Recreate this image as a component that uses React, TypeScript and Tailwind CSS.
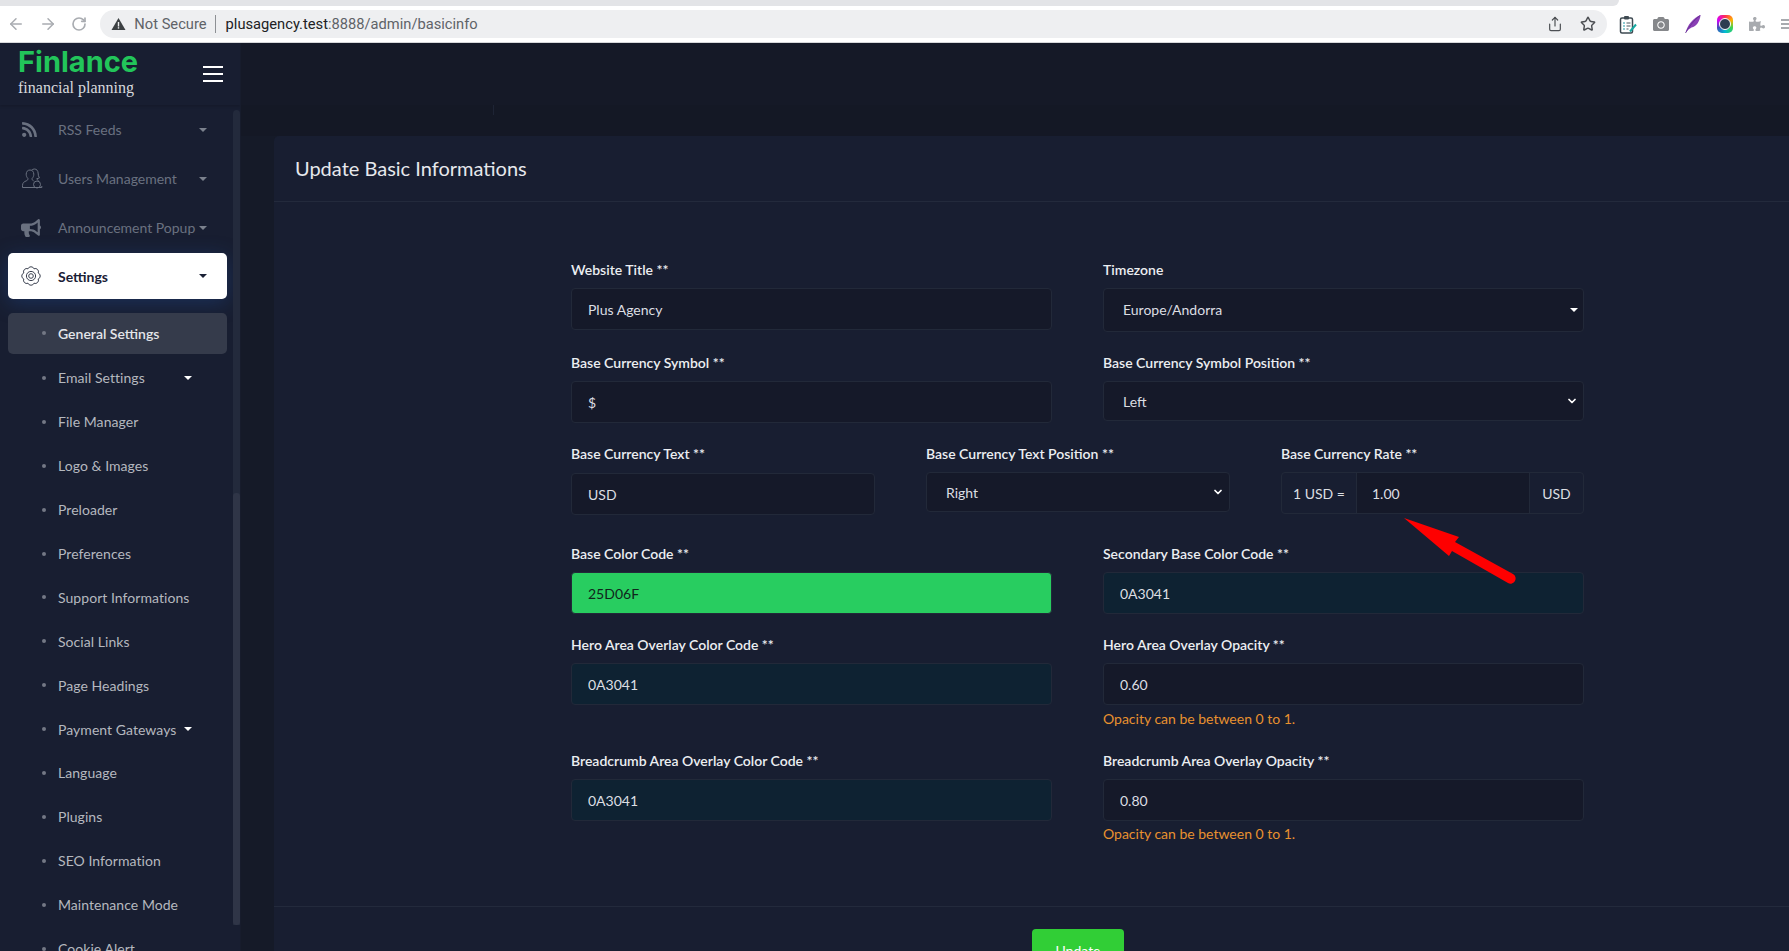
import React from 'react';
import { ArrowLeft, ArrowRight, RotateCw, Share, Star, ChevronDown } from 'lucide-react';
import { FaRss, FaBullhorn, FaCamera, FaPuzzlePiece } from 'react-icons/fa';

const subItems = [
  { label: 'General Settings', active: true },
  { label: 'Email Settings', caret: true },
  { label: 'File Manager' },
  { label: 'Logo & Images' },
  { label: 'Preloader' },
  { label: 'Preferences' },
  { label: 'Support Informations' },
  { label: 'Social Links' },
  { label: 'Page Headings' },
  { label: 'Payment Gateways', caret: true },
  { label: 'Language' },
  { label: 'Plugins' },
  { label: 'SEO Information' },
  { label: 'Maintenance Mode' },
  { label: 'Cookie Alert' },
];

const UsersOutline = () => (
  <svg width="22" height="22" viewBox="0 0 22 22" fill="none" stroke="currentColor" strokeWidth="1">
    <path d="M9 2C6.600 2 5.200 3.800 5.200 6.200c0 1.700.6 3.200 1.700 4.200.2 1.300-.4 2-1.700 2.500C3.300 13.600 1.500 14.700 1.500 17.500v2h13" />
    <path d="M9 2c2.300 0 3.800 1.700 3.800 4.200 0 1.700-.6 3.200-1.700 4.200-.2 1.300.3 2 1.500 2.400" />
    <path d="M10.500 2.300C11.200 1.500 12.200 1 13.400 1c2.300 0 3.600 1.800 3.700 4 .1 2 .4 3.700 1.300 4.900-.8.500-1.700.7-2.600.7.100 1 .8 1.600 1.700 2" />
    <circle cx="16" cy="16.500" r="3.500" />
    <path d="M14.500 19.500h6.300v-1.500" />
  </svg>
);

// scalloped gear: eight arcs round two rings
const gearPoints = Array.from({ length: 8 }, (_, i) => {
  const a = ((i * 45 + 22.5) * Math.PI) / 180;
  return `${(11 + 7.800 * Math.cos(a)).toFixed(2)} ${(11 + 7.800 * Math.sin(a)).toFixed(2)}`;
});
const gearPath = `M${gearPoints[0]} ` + gearPoints.slice(1).concat(gearPoints[0]).map(p => `A3.200 3.200 0 0 1 ${p}`).join(' ') + 'Z';

const GearOutline = () => (
  <svg width="22" height="22" viewBox="0 0 22 22" fill="none" stroke="currentColor" strokeWidth="1">
    <path d={gearPath} />
    <circle cx="11" cy="11" r="4.600" />
    <circle cx="11" cy="11" r="2.300" />
  </svg>
);

const Caret = ({ className }: { className: string }) => (
  <span className={`w-0 h-0 border-x-[4.5px] border-x-transparent border-t-[4.5px] ${className}`} />
);

const TextInput = ({ value, className = '' }: { value: string; className?: string }) => (
  <input
    readOnly
    value={value}
    className={`w-full h-[42px] px-[16px] text-[14px] rounded-[4px] border border-[#222939] outline-none text-[#dcdee3] ${className || 'bg-[#151929]'}`}
  />
);

const SelectBox = ({ value, triangle, className = 'h-[42px]' }: { value: string; triangle?: boolean; className?: string }) => (
  <div className={`w-full flex items-center justify-between pl-[19px] pr-[5px] text-[14px] rounded-[4px] border border-[#222939] bg-[#151929] text-[#dcdee3] ${className}`}>
    <span className={triangle ? 'pb-[2px]' : ''}>{value}</span>
    {triangle ? (
      <Caret className="border-t-white" />
    ) : (
      <ChevronDown size={12} strokeWidth={3.500} className="text-white" />
    )}
  </div>
);

const Label = ({ children }: { children: React.ReactNode }) => (
  <label className="block h-[22px] mb-[7px] leading-[22px] text-[14px] font-semibold text-[#eceef1] whitespace-nowrap">{children}</label>
);

const Note = ({ className }: { className: string }) => <p className={`h-[22px] leading-[22px] text-[14px] text-[#e8912f] ${className}`}>Opacity can be between 0 to 1.</p>;

const BrowserBar = () => (
  <div className="shrink-0 font-['Roboto',sans-serif]">
    <div className="flex h-[6px] bg-white">
      <div className="w-[1619px] bg-[#e3e4e7] rounded-br-[6px]" />
    </div>
    <div className="h-[37px] bg-white flex items-center pl-[7px] border-b border-[#d8d9dc]">
      <div className="flex items-center gap-[14px] text-[#a9acb1] w-[94px]">
        <ArrowLeft size={18} strokeWidth={2} />
        <ArrowRight size={18} strokeWidth={2} />
        <RotateCw size={16} strokeWidth={2.500} />
      </div>
      <div className="w-[1517px] h-[28px] rounded-full bg-[#eeeff1] flex items-center pl-[11px] pr-[11px] text-[14.700px]">
        <svg width="15" height="14" viewBox="0 0 15 14"><path d="M7.500 1 14.500 13H.500z" fill="#3c4043" /><rect x="6.800" y="5" width="1.400" height="4.500" fill="#eeeff1" /><rect x="6.800" y="10.200" width="1.400" height="1.400" fill="#eeeff1" /></svg>
        <span className="ml-[8px] text-[#5f6368]">Not Secure</span>
        <span className="ml-[8px] h-[18px] w-px bg-[#8d9094]" />
        <span className="ml-[10px] text-[#202124]">plusagency.test</span>
        <span className="text-[#5f6368]">:8888/admin/basicinfo</span>
        <div className="ml-auto flex items-center gap-[17px] text-[#4d5054]">
          <Share size={16} strokeWidth={1.800} />
          <Star size={16} strokeWidth={2.200} />
        </div>
      </div>
      <div className="ml-[12px] flex items-center gap-[16px]">
        <svg width="18" height="19" viewBox="0 0 18 19" fill="none">
          <rect x="1.500" y="3" width="12" height="15" rx="1.500" stroke="#3e4a52" strokeWidth="1.500" />
          <rect x="5" y="1" width="5" height="3.500" rx="1" fill="#3e4a52" />
          <path d="M4 8h2M4 11h2M4 14h2" stroke="#1f9aa8" strokeWidth="1.200" />
          <path d="M7.500 8h4M7.500 11h4M7.500 14h2" stroke="#4c5a62" strokeWidth="1.200" />
          <path d="M11 16.500 17 9.500" stroke="#16a8a0" strokeWidth="2" />
        </svg>
        <FaCamera size={16} className="text-[#86888b]" />
        <svg width="16" height="18" viewBox="0 0 16 18">
          <path d="M.500 18C2.500 10 8 3 15.500 0c-.5 6-4 11.500-9 12.500l-3 2z" fill="#8a3fb5" />
          <path d="M.500 18C4 12 8 6 15.500 0" stroke="#5a2a8a" strokeWidth=".7" fill="none" />
        </svg>
        <div className="w-[16px] h-[18px] rounded-[5px] bg-[conic-gradient(#ff2d55,#ffb300,#39d353,#00bcd4,#3f51b5,#d500f9,#ff2d55)] flex items-center justify-center">
          <div className="w-[12px] h-[12px] rounded-full bg-[#2c3e50] border border-white" />
        </div>
        <FaPuzzlePiece size={16} className="text-[#a8abaf]" />
        <div className="flex flex-col gap-[2px] w-[8px]">
          <span className="h-[2px] bg-[#a8abaf]" />
          <span className="h-[2px] bg-[#a8abaf]" />
          <span className="h-[2px] bg-[#a8abaf]" />
        </div>
      </div>
    </div>
  </div>
);

const Sidebar = () => (
  <aside className="w-[241px] shrink-0 bg-[#181e31] flex flex-col overflow-hidden relative border-r border-[#171c2c]">
    <div className="h-[62px] shrink-0 flex items-center pl-[18px] pr-[17px] justify-between shadow-[0_1px_3px_rgba(0,0,0,0.2)]">
      <div className="-mt-[2px]">
        <div className="font-['Inter',sans-serif] font-bold text-[29px] leading-[30px] text-[#22c55a] -mt-[3px] mb-[2px]">Finlance</div>
        <div className="font-['Liberation_Serif',serif] text-[16px] leading-[18px] text-[#d8dade]">financial planning</div>
      </div>
      <div className="flex flex-col gap-[5px] w-[20px]">
        <span className="h-[2px] bg-white" />
        <span className="h-[2px] bg-white" />
        <span className="h-[2px] bg-white" />
      </div>
    </div>
    <nav className="pr-[5px]">
      {[
        { label: 'RSS Feeds', icon: <FaRss size={17} /> },
        { label: 'Users Management', icon: <UsersOutline /> },
        { label: 'Announcement Popup', icon: <FaBullhorn size={20} /> },
      ].map(item => (
        <div key={item.label} className="h-[49px] flex items-center pl-[21px] pr-[28px] text-[#6a7180] text-[14px] whitespace-nowrap">
          <span className="w-[37px] shrink-0">{item.icon}</span>
          <span className="flex-1">{item.label}</span>
          <Caret className="border-t-[#7b818d]" />
        </div>
      ))}
      <div className="mx-[8px] mt-px h-[46px] rounded-[5px] bg-white flex items-center pl-[12px] pr-[20px] text-[#1a2035] text-[14px] font-bold shadow-[0_4px_20px_rgba(30,70,140,0.45)]">
        <span className="text-[#3b4150] shrink-0"><GearOutline /></span>
        <span className="ml-[16px] flex-1">Settings</span>
        <Caret className="border-t-[#1a2035]" />
      </div>
      <div className="mt-[14px]">
        {subItems.map(item => (
          <div
            key={item.label}
            className={`mx-[8px] flex items-center pl-[34px] pr-[35px] text-[14px] whitespace-nowrap ${
              item.active ? 'h-[41px] mb-[2px] pb-[1px] rounded-[5px] bg-[#353b4b] text-[#e4e6ea] font-semibold' : 'h-[43.900px] tracking-[0.05px] text-[#b5b8bf]'
            }`}
          >
            <span className="w-[4px] h-[4px] rounded-full bg-[#737885] mr-[12px] shrink-0" />
            <span className="flex-1">{item.label}</span>
            {item.caret && <Caret className="border-t-white" />}
          </div>
        ))}
      </div>
    </nav>
    {/* scrollbar */}
    <div className="absolute right-0 top-[67px] bottom-[26px] w-[7px] bg-[#232a3c] rounded-t-[4px]">
      <div className="absolute left-0 right-0 top-[383px] bottom-0 bg-[#2f3547] rounded-[3px]" />
    </div>
  </aside>
);

export default function App() {
  return (
    <div className="relative w-[1789px] h-[951px] overflow-hidden flex flex-col bg-[#151a28] font-['Lato',sans-serif]">
      <BrowserBar />
      <div className="flex flex-1 min-h-0">
        <Sidebar />
        <main className="flex-1 min-w-0 flex flex-col">
          <div className="h-[62px] shrink-0 bg-[#151927] shadow-[0_1px_2px_rgba(0,0,0,0.15)]" />
          <div className="h-[31px] shrink-0 bg-[#141825]">
            <div className="ml-[252px] w-px h-[10px] bg-[#1e2435]" />
          </div>
          <section className="flex-1 ml-[33px] bg-[#181e31] rounded-tl-[5px]">
            <div className="h-[66px] flex items-center pb-[2px] pl-[21px] border-b border-[#232a3c]">
              <h1 className="text-[20px] text-[#e6e8ec]">Update Basic Informations</h1>
            </div>
            <div className="ml-[297px] w-[1013px] pt-[57px] h-[704px]">
              <div className="flex gap-[51px]">
                <div className="flex-1"><Label>Website Title **</Label><TextInput value="Plus Agency" /></div>
                <div className="flex-1"><Label>Timezone</Label><SelectBox value="Europe/Andorra" triangle className="h-[44px]" /></div>
              </div>
              <div className="flex gap-[51px] mt-[20px]">
                <div className="flex-1"><Label>Base Currency Symbol **</Label><TextInput value="$" /></div>
                <div className="flex-1"><Label>Base Currency Symbol Position **</Label><SelectBox value="Left" className="h-[40px]" /></div>
              </div>
              <div className="flex gap-[51px] mt-[20px]">
                <div className="w-[304px]"><Label>Base Currency Text **</Label><div className="pt-px"><TextInput value="USD" /></div></div>
                <div className="w-[304px]"><Label>Base Currency Text Position **</Label><SelectBox value="Right" className="h-[40px]" /></div>
                <div className="w-[303px]">
                  <Label>Base Currency Rate **</Label>
                  <div className="flex h-[42px] mt-px rounded-[4px] border border-[#222939] text-[14px] text-[#dcdee3]">
                    <div className="w-[75px] shrink-0 flex items-center justify-center border-r border-[#222939]">1 USD =</div>
                    <input readOnly value="1.00" className="flex-1 min-w-0 px-[15px] bg-[#151929] outline-none" />
                    <div className="w-[54px] shrink-0 flex items-center justify-center border-l border-[#222939]">USD</div>
                  </div>
                </div>
              </div>
              <div className="flex gap-[51px] mt-[28px]">
                <div className="flex-1"><Label>Base Color Code **</Label><TextInput value="25D06F" className="bg-[#28cd60] !text-[#10251c]" /></div>
                <div className="flex-1"><Label>Secondary Base Color Code **</Label><TextInput value="0A3041" className="bg-[#0e2232]" /></div>
              </div>
              <div className="flex gap-[51px] mt-[20px]">
                <div className="flex-1"><Label>Hero Area Overlay Color Code **</Label><TextInput value="0A3041" className="bg-[#0e2232]" /></div>
                <div className="flex-1"><Label>Hero Area Overlay Opacity **</Label><TextInput value="0.60" /><Note className="mt-[3px]" /></div>
              </div>
              <div className="flex gap-[51px] mt-[20px]">
                <div className="flex-1"><Label>Breadcrumb Area Overlay Color Code **</Label><TextInput value="0A3041" className="bg-[#0e2232]" /></div>
                <div className="flex-1"><Label>Breadcrumb Area Overlay Opacity **</Label><TextInput value="0.80" /><Note className="mt-[2px]" /></div>
              </div>
            </div>
            <div className="border-t border-[#232a3c] pt-[22px] flex justify-center">
              <button className="w-[92px] h-[42px] rounded-[4px] bg-[#31ce36] text-[14px] text-white ml-[93px]">Update</button>
            </div>
          </section>
        </main>
      </div>
      {/* red annotation arrow over the form */}
      <svg className="absolute left-0 top-0 pointer-events-none" width="1789" height="951">
        <path d="M1404 518 1459 537 1455 542 1513 574a5 5 0 0 1-5 9L1452 551 1449 556Z" fill="#fe0000" />
      </svg>
    </div>
  );
}
